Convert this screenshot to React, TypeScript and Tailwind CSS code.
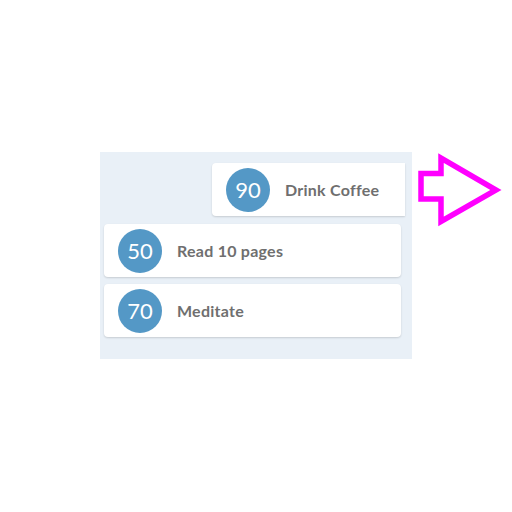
import React from "react";

function Badge({ n }: { n: number }) {
  return (
    <div className="w-[44px] h-[44px] shrink-0 rounded-full bg-[#5498c6] flex items-center justify-center text-white text-[22px] leading-none font-normal">
      {n}
    </div>
  );
}

export default function App() {
  return (
    <div className="w-[512px] h-[512px] bg-white relative" style={{ fontFamily: "Lato, 'Noto Sans', sans-serif" }}>
      <div className="absolute left-[100px] top-[152px] w-[312px] h-[207px] bg-[#e9f0f7] pl-[4px] pr-[11px] pt-[11px] flex flex-col">
        <div className="ml-[108px] w-[193px] h-[53px] bg-white rounded-l-[4px] shadow-[0_1px_2px_rgba(0,0,0,0.15)] flex items-center pl-[14px] gap-[15px]">
          <Badge n={90} />
          <span className="text-[16px] tracking-[0.25px] font-bold text-[#6f6f6f]">Drink Coffee</span>
        </div>
        <div className="mt-[8px] w-[297px] h-[53px] bg-white rounded-[4px] shadow-[0_1px_2px_rgba(0,0,0,0.15)] flex items-center pl-[14px] gap-[15px]">
          <Badge n={50} />
          <span className="text-[16px] tracking-[0.25px] font-bold text-[#6f6f6f]">Read 10 pages</span>
        </div>
        <div className="mt-[7px] w-[297px] h-[53px] bg-white rounded-[4px] shadow-[0_1px_2px_rgba(0,0,0,0.15)] flex items-center pl-[14px] gap-[15px]">
          <Badge n={70} />
          <span className="text-[16px] tracking-[0.25px] font-bold text-[#6f6f6f]">Meditate</span>
        </div>
      </div>
      <svg className="absolute left-0 top-0" width="512" height="512" viewBox="0 0 512 512">
        <polygon
          points="421,173.5 441,173.5 441,158 496,190 441,221.5 441,199 421,199"
          fill="none"
          stroke="#ff00ff"
          strokeWidth="5.5"
          strokeLinejoin="miter"
        />
      </svg>
    </div>
  );
}
